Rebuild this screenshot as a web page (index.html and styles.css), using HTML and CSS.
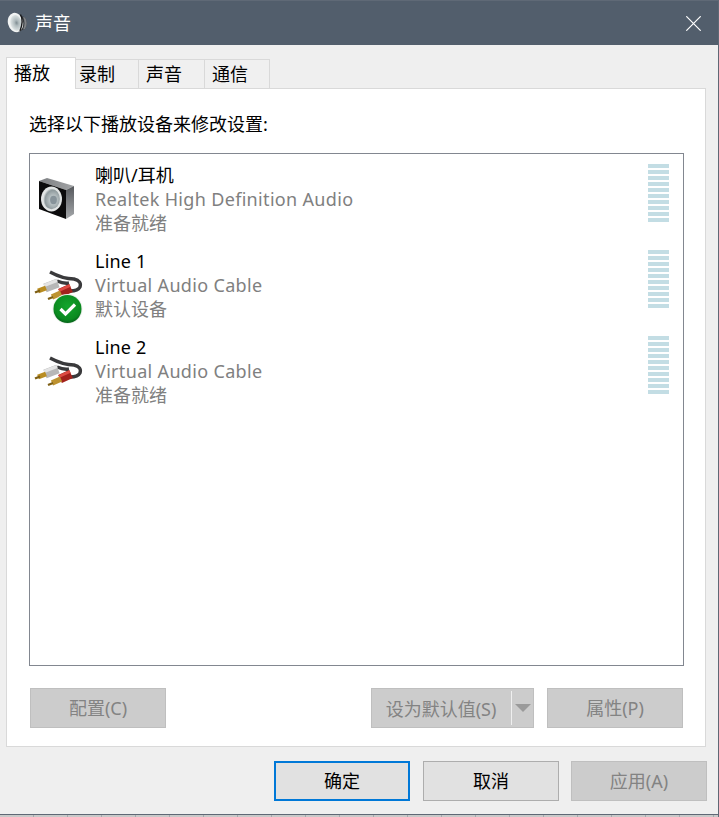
FILE: index.html
```html
<!DOCTYPE html>
<html lang="zh-CN">
<head>
<meta charset="utf-8">
<title>声音</title>
<link rel="stylesheet" href="styles.css">
</head>
<body>
<div class="window">
  <header class="titlebar">
    <svg class="title-icon" width="21" height="24" viewBox="0 0 21 24">
      <defs>
        <radialGradient id="cone" cx="0.55" cy="0.5" r="0.6"><stop offset="0" stop-color="#7f8d92"/><stop offset="0.3" stop-color="#aeb9bc"/><stop offset="0.75" stop-color="#d5dcdd"/><stop offset="1" stop-color="#f2f4f4"/></radialGradient>
      </defs>
      <path d="M9 2.5 L18 6.5 Q21.5 12 18 18 L9 21.5Z" fill="#34373b"/>
      <path d="M18 6.5 Q21.5 12 18 18 L16 18.5 Q19 12 16 6Z" fill="#7d8084"/>
      <ellipse cx="8.5" cy="11.5" rx="7.6" ry="9.8" fill="#f1f3f3" transform="rotate(-14 8.5 11.5)"/>
      <ellipse cx="9" cy="12" rx="5.8" ry="8" fill="url(#cone)" transform="rotate(-14 9 12)"/>
      <path d="M13.5 3.5 Q17 10 13 20" fill="none" stroke="#17181a" stroke-width="1.4"/>
    </svg>
    <span class="title-text">声音</span>
    <svg class="close-icon" width="15" height="15" viewBox="0 0 15 15"><path d="M0.3 0.3 L14.7 14.7 M14.7 0.3 L0.3 14.7" stroke="#fff" stroke-width="1.2" fill="none"/></svg>
  </header>

  <main class="content">
    <nav class="tabs">
      <div class="tab tab-active">播放</div>
      <div class="tab tab-record">录制</div>
      <div class="tab tab-sounds">声音</div>
      <div class="tab tab-comms">通信</div>
    </nav>
    <section class="panel">
      <p class="prompt">选择以下播放设备来修改设置:</p>
      <div class="listbox">
        <svg class="defs" width="0" height="0">
          <defs>
            <linearGradient id="boxtop" x1="0" y1="0" x2="1" y2="0"><stop offset="0" stop-color="#7c7e81"/><stop offset="1" stop-color="#a2a4a6"/></linearGradient>
            <linearGradient id="boxside" x1="0" y1="0" x2="0" y2="1"><stop offset="0" stop-color="#55585c"/><stop offset="1" stop-color="#a5a8ab"/></linearGradient>
            <radialGradient id="spk" cx="0.6" cy="0.55" r="0.6"><stop offset="0" stop-color="#78868b"/><stop offset="0.3" stop-color="#bcc5c7"/><stop offset="0.8" stop-color="#8f9a9d"/><stop offset="1" stop-color="#dfe3e3"/></radialGradient>
            <radialGradient id="badge" cx="0.5" cy="0.4" r="0.6"><stop offset="0" stop-color="#13a52d"/><stop offset="0.8" stop-color="#0b8a20"/><stop offset="1" stop-color="#06621a"/></radialGradient>
            <g id="rca" transform="translate(2 0)">
              <path d="M15 12 Q28 19 39 19 Q47 21 45 27 Q43 31 35 31" fill="none" stroke="#3a3a3c" stroke-width="3.4"/>
              <path d="M22 21 Q29 24 34 23" fill="none" stroke="#3a3a3c" stroke-width="3.4"/>
              <path d="M10 28 L23 23" fill="none" stroke="#b7b7b7" stroke-width="9"/>
              <path d="M9 25.5 L22 20.5" fill="none" stroke="#e4e4e4" stroke-width="3"/>
              <path d="M3 31 L11 28" fill="none" stroke="#b98d22" stroke-width="5"/>
              <path d="M0 32.5 L5 30.5" fill="none" stroke="#7e5f14" stroke-width="2.4"/>
              <path d="M25 33 L36 28" fill="none" stroke="#a3211c" stroke-width="9"/>
              <path d="M24 30.5 L35 25.5" fill="none" stroke="#dd4a42" stroke-width="3"/>
              <path d="M17 37 L26 33" fill="none" stroke="#bd9230" stroke-width="5.5"/>
              <path d="M13 39 L18 37" fill="none" stroke="#7e5f14" stroke-width="2.4"/>
            </g>
          </defs>
        </svg>
        <div class="device">
          <div class="device-icon">
            <svg width="46" height="48" viewBox="0 0 46 48">
              <path d="M6 7 L14 4 L41 12 L33 16Z" fill="url(#boxtop)"/>
              <path d="M33 16 L41 12 L41 40 L33 45Z" fill="url(#boxside)"/>
              <path d="M6 7 L33 16 L33 45 L6 35Z" fill="#0b0b0c"/>
              <ellipse cx="18.5" cy="25" rx="10.5" ry="12.5" fill="#e2e5e5"/>
              <ellipse cx="18.5" cy="25" rx="8.4" ry="10.2" fill="url(#spk)"/>
              <ellipse cx="20.5" cy="26" rx="3.4" ry="4.2" fill="#87939a"/>
            </svg>
          </div>
          <div class="device-text">
            <div class="device-name">喇叭/耳机</div>
            <div class="device-line latin">Realtek High Definition Audio</div>
            <div class="device-line">准备就绪</div>
          </div>
          <div class="meter"><i></i><i></i><i></i><i></i><i></i><i></i><i></i><i></i><i></i><i></i></div>
        </div>

        <div class="device">
          <div class="device-icon">
            <svg width="52" height="64" viewBox="0 0 52 64">
              <use href="#rca"/>
              <circle cx="34.5" cy="49" r="15" fill="#e9f0e9"/>
              <circle cx="34.5" cy="49" r="14" fill="url(#badge)"/>
              <path d="M27.5 49 L32.5 54 L42 44.5" fill="none" stroke="#fff" stroke-width="3.2"/>
            </svg>
          </div>
          <div class="device-text">
            <div class="device-name latin-name">Line 1</div>
            <div class="device-line latin">Virtual Audio Cable</div>
            <div class="device-line">默认设备</div>
          </div>
          <div class="meter"><i></i><i></i><i></i><i></i><i></i><i></i><i></i><i></i><i></i><i></i></div>
        </div>

        <div class="device">
          <div class="device-icon">
            <svg width="52" height="64" viewBox="0 0 52 64">
              <use href="#rca"/>
            </svg>
          </div>
          <div class="device-text">
            <div class="device-name latin-name">Line 2</div>
            <div class="device-line latin">Virtual Audio Cable</div>
            <div class="device-line">准备就绪</div>
          </div>
          <div class="meter"><i></i><i></i><i></i><i></i><i></i><i></i><i></i><i></i><i></i><i></i></div>
        </div>
      </div>
      <div class="panel-actions">
        <button class="btn btn-disabled">配置(C)</button>
        <div class="action-group">
          <div class="split">
            <span class="split-label">设为默认值(S)</span>
            <span class="split-divider"></span>
            <span class="split-arrow"></span>
          </div>
          <button class="btn btn-disabled">属性(P)</button>
        </div>
      </div>
    </section>
    <footer class="dialog-actions">
      <button class="btn btn-default">确定</button>
      <button class="btn">取消</button>
      <button class="btn btn-disabled">应用(A)</button>
    </footer>
  </main>
  <div class="edge-strip"></div>
</div>
</body>
</html>
```

FILE: styles.css
```css
* { box-sizing: border-box; }
html, body { margin: 0; padding: 0; }
body {
  width: 719px;
  height: 817px;
  overflow: hidden;
  font-family: "Noto Sans", "Noto Sans CJK SC", sans-serif;
  font-size: 18px;
  color: #000;
  background: #efefef;
}
.window {
  width: 719px;
  height: 817px;
  display: flex;
  flex-direction: column;
  border-right: 1px solid #5f6875;
}
.titlebar {
  height: 45px;
  flex: none;
  display: flex;
  align-items: center;
  background: #525e6c;
  border-top: 1px solid #5f6976;
  padding: 0 17px 0 7px;
  color: #fff;
}
.title-icon { flex: none; margin-right: 7px; }
.title-text { flex: 1; line-height: 24px; }
.close-icon { flex: none; }
.content {
  flex: 1;
  min-height: 0;
  display: flex;
  flex-direction: column;
  padding: 12px 12px 0 6px;
}
.tabs {
  display: flex;
  align-items: flex-end;
  height: 32px;
  margin-bottom: -1px;
  flex: none;
}
.tab {
  height: 30px;
  line-height: 29px;
  background: #f0f0f0;
  border: 1px solid #d9d9d9;
  border-left: 0;
}
.tab-record { width: 63px; padding-left: 3px; }
.tab-sounds { width: 66px; padding-left: 7px; }
.tab-comms { width: 65px; padding-left: 7px; }
.tab-active {
  width: 70px;
  height: 32px;
  line-height: 30px;
  padding-left: 7px;
  background: #fff;
  border-left: 1px solid #d9d9d9;
  border-bottom: 0;
  position: relative;
  z-index: 1;
}
.panel {
  height: 659px;
  flex: none;
  background: #fff;
  border: 1px solid #d9d9d9;
  padding: 22px 21px 17px 22px;
  display: flex;
  flex-direction: column;
}
.prompt {
  margin: 0 0 16px 0;
  height: 26px;
  line-height: 26px;
}
.listbox {
  height: 513px;
  flex: none;
  border: 1px solid #828790;
  padding: 8px 14px 0 0;
  display: flex;
  flex-direction: column;
}
.defs { position: absolute; }
.device {
  height: 86px;
  flex: none;
  display: flex;
}
.device-icon {
  width: 65px;
  flex: none;
  padding: 12px 0 0 3px;
}
.device-text {
  flex: 1;
  padding-top: 1px;
}
.device-name, .device-line {
  height: 24px;
  line-height: 24px;
  white-space: nowrap;
}
.device-line { color: #808080; }
.latin { letter-spacing: 0.33px; }
.latin-name { letter-spacing: 0.2px; }
.meter {
  width: 21px;
  flex: none;
  display: flex;
  flex-direction: column;
  gap: 2px;
  padding-top: 2px;
}
.meter i {
  display: block;
  height: 4px;
  background: #c3dde4;
}
.panel-actions {
  display: flex;
  justify-content: space-between;
  margin: 22px 1px 0 1px;
}
.action-group {
  display: flex;
  gap: 13px;
}
.btn {
  width: 136px;
  height: 40px;
  padding: 0;
  font: inherit;
  line-height: 36px;
  color: #000;
  background: #e1e1e1;
  border: 1px solid #adadad;
}
.btn-disabled {
  color: #838383;
  background: #cccccc;
  border-color: #bfbfbf;
}
.btn-default {
  border: 2px solid #0078d7;
  margin-right: 1px;
}
.split {
  width: 163px;
  height: 40px;
  display: flex;
  align-items: center;
  color: #838383;
  background: #cccccc;
  border: 1px solid #bfbfbf;
}
.split-label {
  width: 139px;
  padding-right: 1px;
  text-align: center;
  white-space: nowrap;
}
.split-divider {
  width: 1px;
  height: 34px;
  flex: none;
  background: #efefef;
}
.split-arrow {
  flex: none;
  width: 0;
  height: 0;
  margin-left: 3px;
  border-left: 8px solid transparent;
  border-right: 8px solid transparent;
  border-top: 8px solid #9a9a9a;
}
.dialog-actions {
  display: flex;
  justify-content: flex-end;
  gap: 12px;
  margin-top: 14px;
  margin-right: -1px;
}
.edge-strip {
  flex: none;
  height: 3px;
  background: repeating-linear-gradient(90deg, #c9c9c9 0, #c9c9c9 33px, #a5a9ae 33px, #a5a9ae 34px);
  border-top: 1px solid #5f6875;
}
```
